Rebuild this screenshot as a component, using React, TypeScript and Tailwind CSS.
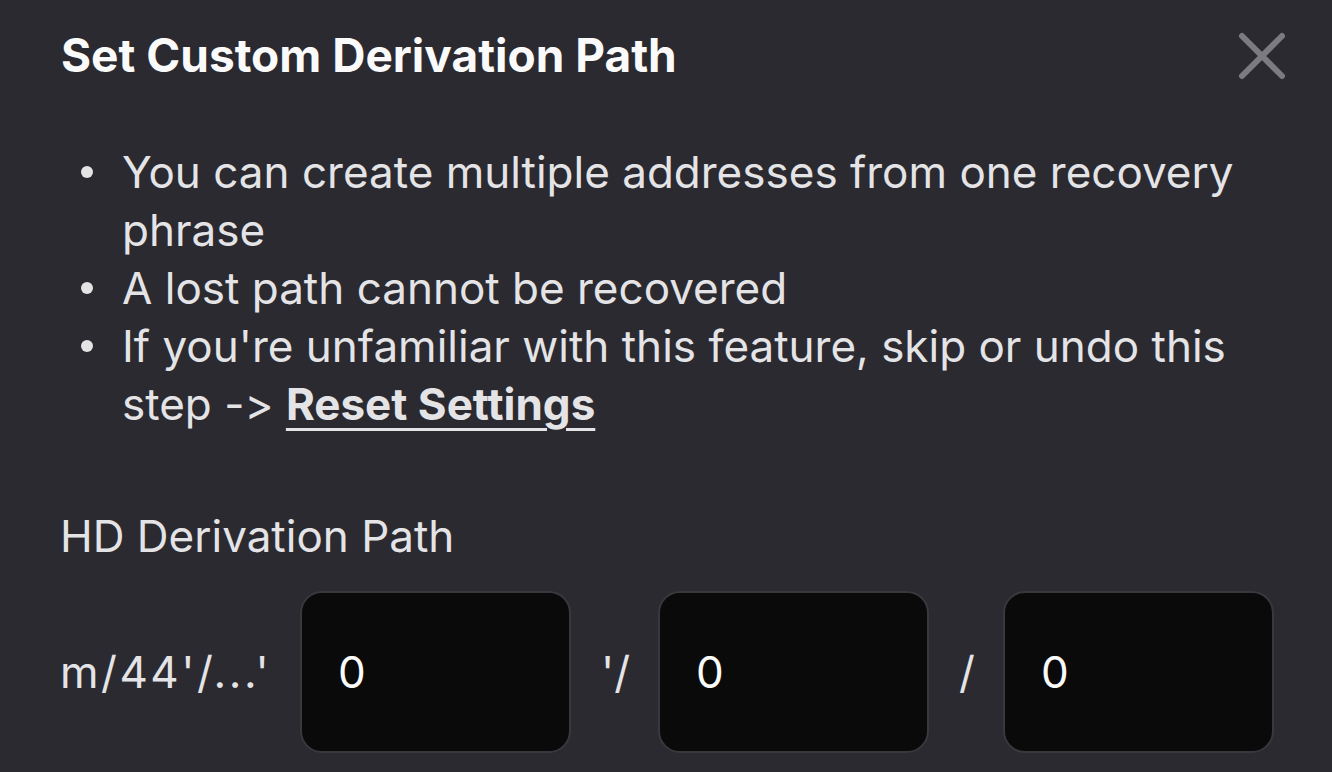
import type { ReactNode } from 'react';

function CloseIcon() {
  return (
    <svg width="48" height="48" viewBox="0 0 48 48" fill="none">
      <path
        d="M4 4L44 44M44 4L4 44"
        stroke="currentColor"
        strokeWidth="6"
        strokeLinecap="round"
      />
    </svg>
  );
}

function Bullet({ children }: { children: ReactNode }) {
  return (
    <li className="flex">
      <span className="flex h-[58px] w-[42px] shrink-0 items-center pl-[1px]">
        <span className="size-[12px] rounded-full bg-[#e4e4e7]" />
      </span>
      <span>{children}</span>
    </li>
  );
}

function PathInput({ value }: { value: string }) {
  return (
    <input
      className="h-[162px] w-[271px] shrink-0 rounded-[22px] border-2 border-[#38383d] bg-[#0a0a0a] px-[36px] text-[44px] text-[#fafafa] outline-none"
      defaultValue={value}
    />
  );
}

export default function App() {
  return (
    <div className="h-[772px] w-[1332px] overflow-hidden bg-[#2b2a30] font-['Inter',sans-serif] text-[#e4e4e7] [font-feature-settings:'calt'_0]">
      <div className="flex items-center justify-between pt-[21px] pr-[46px] pl-[61px]">
        <h1 className="text-[46px] font-bold text-[#fafafa]">
          Set Custom Derivation Path
        </h1>
        <button className="text-[#7b7b80]">
          <CloseIcon />
        </button>
      </div>

      <ul className="mt-[53px] pr-[50px] pl-[80px] text-[44px] leading-[58px]">
        <Bullet>You can create multiple addresses from one recovery phrase</Bullet>
        <Bullet>A lost path cannot be recovered</Bullet>
        <Bullet>
          If you&apos;re unfamiliar with this feature, skip or undo this step
          -&gt;{' '}
          <a
            href="#"
            className="font-bold underline decoration-[3px] underline-offset-[8px]"
          >
            Reset Settings
          </a>
        </Bullet>
      </ul>

      <p className="mt-[74px] pl-[60px] text-[44px] leading-[58px]">
        HD Derivation Path
      </p>

      <div className="mt-[26px] flex items-center gap-[30px] pl-[60px] text-[44px]">
        <span className="w-[210px] tracking-[2.5px]">m/44&apos;/...&apos;</span>
        <PathInput value="0" />
        <span className="w-[27px]">&apos;/</span>
        <PathInput value="0" />
        <span className="w-[14px]">/</span>
        <PathInput value="0" />
      </div>
    </div>
  );
}
